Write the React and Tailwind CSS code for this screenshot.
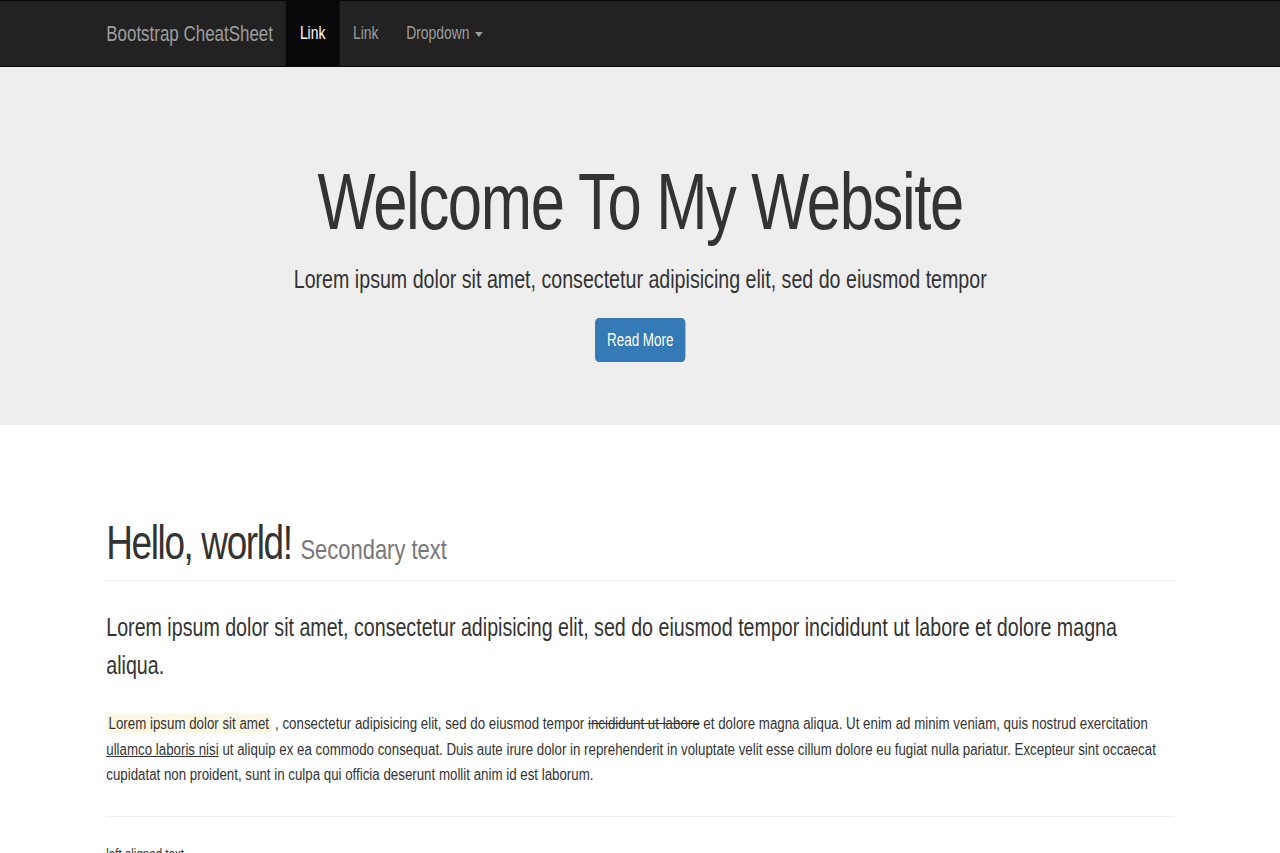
import React from 'react';

// The reference is squeezed sideways (~0.77), so the page is laid out 1663px wide and scaled into 1280px.
const font = { fontFamily: '"Liberation Sans", Arial, sans-serif' };

export default function App() {
  return (
    <div className="min-h-screen w-full overflow-hidden bg-white">
      <div className="w-[1663px] origin-top-left scale-x-[0.77] text-[#333]" style={font}>
        <nav className="h-[67px] border-y border-[#080808] bg-[#222]">
          <div className="mx-auto flex h-full w-[1387px] items-stretch">
            <a className="flex items-center pr-[17px] text-[22px] text-[#9d9d9d]">Bootstrap CheatSheet</a>
            <a className="flex items-center bg-[#080808] px-[18px] text-[18px] text-white">Link</a>
            <a className="flex items-center px-[18px] text-[18px] text-[#9d9d9d]">Link</a>
            <a className="flex items-center gap-[7px] px-[18px] text-[18px] text-[#9d9d9d]">
              Dropdown
              <span className="mt-[2px] h-0 w-0 border-x-[5px] border-t-[5px] border-x-transparent border-t-[#9d9d9d]" />
            </a>
          </div>
        </nav>

        <header className="flex h-[358px] flex-col items-center bg-[#eee] pt-[91px]">
          <h1 className="text-[80px] leading-[88px] tracking-[-1.8px]">Welcome To My Website</h1>
          <p className="mt-[17px] text-[25.5px] leading-[32px]">
            Lorem ipsum dolor sit amet, consectetur adipisicing elit, sed do eiusmod tempor
          </p>
          <button className="mt-[23px] h-[44px] w-[117px] rounded-[5px] border border-[#2e6da4] bg-[#337ab7] text-[17.5px] text-white">
            Read More
          </button>
        </header>

        <main className="mx-auto w-[1387px] pt-[91px]">
          <div className="border-b border-[#eee] pb-[4px]">
            <h1 className="text-[48px] leading-[54px] tracking-[-1.8px]">
              Hello, world! <small className="text-[28.5px] tracking-normal text-[#777]">Secondary text</small>
            </h1>
          </div>
          <p className="mt-[27px] text-[25.5px] leading-[38px]">
            Lorem ipsum dolor sit amet, consectetur adipisicing elit, sed do eiusmod tempor incididunt ut labore et dolore magna aliqua.
          </p>
          <p className="mt-[27px] text-[17.3px] leading-[25.7px]">
            <mark className="bg-[#fcf8e3] px-[3px] text-[#333]">Lorem ipsum dolor sit amet</mark> , consectetur adipisicing elit, sed do eiusmod tempor <s>incididunt ut labore</s> et dolore magna aliqua. Ut enim ad minim veniam, quis nostrud exercitation <u>ullamco laboris nisi</u> ut aliquip ex ea commodo consequat. Duis aute irure dolor in reprehenderit in voluptate velit esse cillum dolore eu fugiat nulla pariatur. Excepteur sint occaecat cupidatat non proident, sunt in culpa qui officia deserunt mollit anim id est laborum.
          </p>
          <hr className="mt-[28px] border-[#eee]" />
          <p className="mt-[27px] text-[15px] leading-[20px]">left aligned text</p>
        </main>
      </div>
    </div>
  );
}
